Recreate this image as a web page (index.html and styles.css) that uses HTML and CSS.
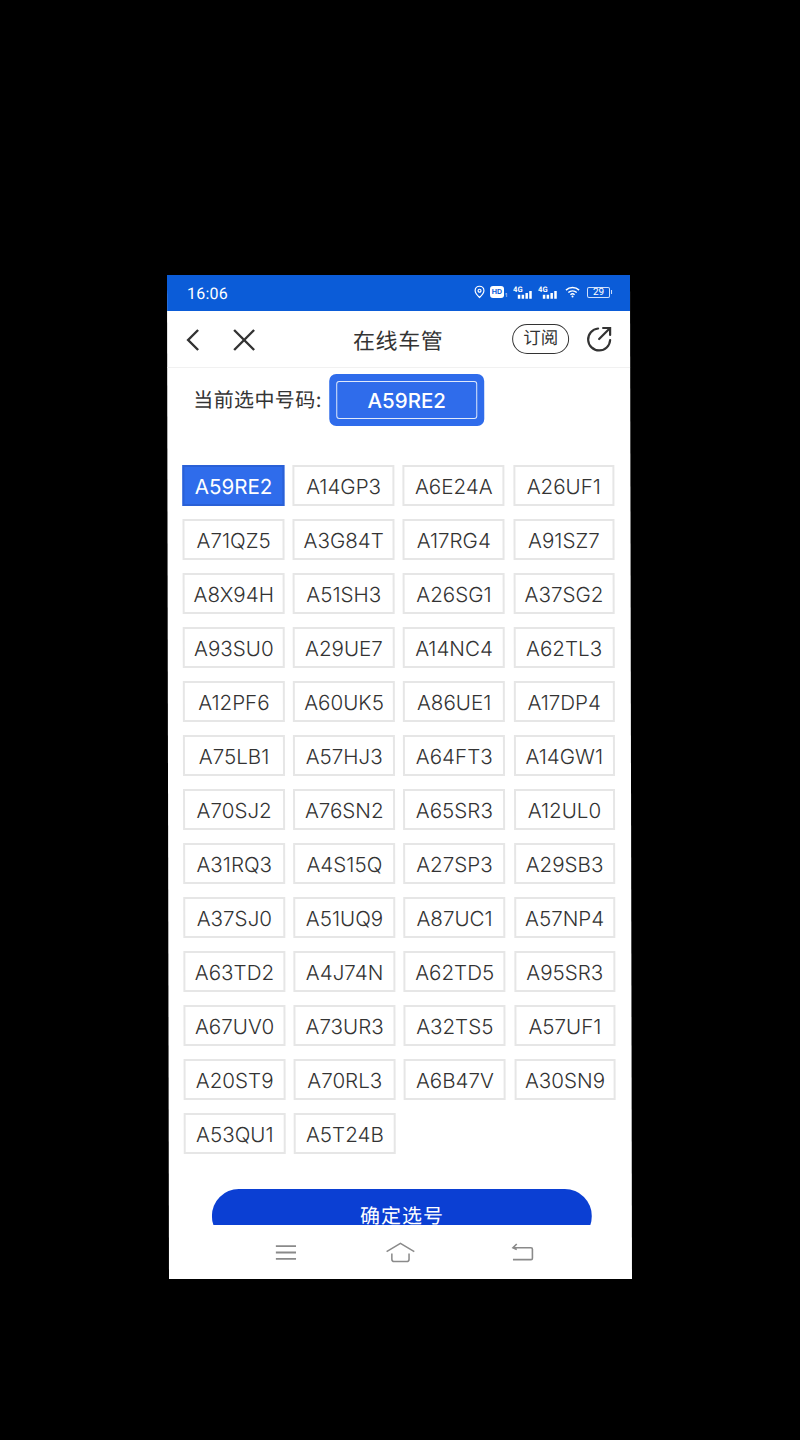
FILE: index.html
```html
<!DOCTYPE html>
<html lang="zh-CN">
<head>
<meta charset="utf-8">
<title>在线车管</title>
<link rel="stylesheet" href="styles.css">
</head>
<body>
<main class="phone">
  <header class="status">
    <span class="time">16:06</span>
    <div class="status-icons">
      <svg class="i-pin" viewBox="0 0 12 14"><path d="M6 13 C3 10 1.2 8 1.2 5.5 A4.8 4.8 0 0 1 10.8 5.5 C10.8 8 9 10 6 13Z M6 4 A1.6 1.6 0 1 0 6 7.2 A1.6 1.6 0 1 0 6 4Z" fill="none" stroke="#fff" stroke-width="1.3"/></svg>
      <span class="hd">HD</span><span class="hd-sub">1</span>
      <svg class="i-net" viewBox="0 0 22 14"><text x="0" y="6.5" class="net-text">4G</text><rect x="5" y="10" width="2.6" height="4" fill="#fff"/><rect x="9" y="10" width="2.6" height="4" fill="#fff"/><rect x="13" y="8" width="2.6" height="6" fill="#fff"/><rect x="17" y="6" width="2.6" height="8" fill="#fff"/></svg>
      <svg class="i-net" viewBox="0 0 22 14"><text x="0" y="6.5" class="net-text">4G</text><rect x="5" y="10" width="2.6" height="4" fill="#fff"/><rect x="9" y="10" width="2.6" height="4" fill="#fff"/><rect x="13" y="8" width="2.6" height="6" fill="#fff"/><rect x="17" y="6" width="2.6" height="8" fill="#fff"/></svg>
      <svg class="i-wifi" viewBox="0 0 16 12"><path d="M1 4 A10 10 0 0 1 15 4 M3.5 6.6 A6.4 6.4 0 0 1 12.5 6.6 M5.8 9 A3.2 3.2 0 0 1 10.2 9" fill="none" stroke="#fff" stroke-width="1.5"/><circle cx="8" cy="10.8" r="1.1" fill="#fff"/></svg>
      <span class="battery"><span class="battery-num">29</span></span>
    </div>
  </header>

  <nav class="topbar">
    <svg class="i-back" viewBox="0 0 16 24"><path d="M13 2 L3 12 L13 22" fill="none" stroke="#333" stroke-width="2.4"/></svg>
    <svg class="i-close" viewBox="0 0 24 24"><path d="M2 2 L22 22 M22 2 L2 22" fill="none" stroke="#333" stroke-width="2.4"/></svg>
    <h1 class="title">在线车管</h1>
    <span class="subscribe">订阅</span>
    <svg class="i-share" viewBox="0 0 28 28"><path d="M13 3.5 A11 11 0 1 0 25 15" fill="none" stroke="#333" stroke-width="2.2" stroke-linecap="round"/><path d="M14 14 L24 4 M18 3 H25 V10" fill="none" stroke="#333" stroke-width="2.2" stroke-linecap="round"/></svg>
  </nav>

  <section class="current">
    <span class="current-label">当前选中号码:</span>
    <div class="plate"><div class="plate-inner">A59RE2</div></div>
  </section>

  <section class="grid">
    <div class="cell active">A59RE2</div><div class="cell">A14GP3</div><div class="cell">A6E24A</div><div class="cell">A26UF1</div>
    <div class="cell">A71QZ5</div><div class="cell">A3G84T</div><div class="cell">A17RG4</div><div class="cell">A91SZ7</div>
    <div class="cell">A8X94H</div><div class="cell">A51SH3</div><div class="cell">A26SG1</div><div class="cell">A37SG2</div>
    <div class="cell">A93SU0</div><div class="cell">A29UE7</div><div class="cell">A14NC4</div><div class="cell">A62TL3</div>
    <div class="cell">A12PF6</div><div class="cell">A60UK5</div><div class="cell">A86UE1</div><div class="cell">A17DP4</div>
    <div class="cell">A75LB1</div><div class="cell">A57HJ3</div><div class="cell">A64FT3</div><div class="cell">A14GW1</div>
    <div class="cell">A70SJ2</div><div class="cell">A76SN2</div><div class="cell">A65SR3</div><div class="cell">A12UL0</div>
    <div class="cell">A31RQ3</div><div class="cell">A4S15Q</div><div class="cell">A27SP3</div><div class="cell">A29SB3</div>
    <div class="cell">A37SJ0</div><div class="cell">A51UQ9</div><div class="cell">A87UC1</div><div class="cell">A57NP4</div>
    <div class="cell">A63TD2</div><div class="cell">A4J74N</div><div class="cell">A62TD5</div><div class="cell">A95SR3</div>
    <div class="cell">A67UV0</div><div class="cell">A73UR3</div><div class="cell">A32TS5</div><div class="cell">A57UF1</div>
    <div class="cell">A20ST9</div><div class="cell">A70RL3</div><div class="cell">A6B47V</div><div class="cell">A30SN9</div>
    <div class="cell">A53QU1</div><div class="cell">A5T24B</div>
  </section>

  <div class="confirm-clip"><button class="confirm">确定选号</button></div>

  <footer class="sysnav">
    <svg class="i-menu" viewBox="0 0 24 18"><path d="M1 2 H23 M1 9 H23 M1 16 H23" stroke="#8a8a8a" stroke-width="2"/></svg>
    <svg class="i-home" viewBox="0 0 32 22"><path d="M1.5 10 L16 1.5 L30.5 10" fill="none" stroke="#8a8a8a" stroke-width="1.6"/><path d="M7 12 V18 Q7 20.5 9.5 20.5 H22.5 Q25 20.5 25 18 V12" fill="none" stroke="#8a8a8a" stroke-width="1.6"/></svg>
    <svg class="i-ret" viewBox="0 0 24 20"><path d="M2 5 H21 Q22.5 5 22.5 6.5 V16 Q22.5 17.5 21 17.5 H2 M6 1 L2 5 L6 7" fill="none" stroke="#8a8a8a" stroke-width="1.7"/></svg>
  </footer>
</main>
</body>
</html>
```
FILE: styles.css
```css
* { box-sizing: border-box; }
html, body { margin: 0; height: 1440px; background: #000; overflow: hidden; }
body { padding: 275px 0 0 168px; font-family: "Inter", "Noto Sans CJK SC", sans-serif; }

.phone {
  width: 463px;
  height: 1004px;
  background: #fff;
  display: flex;
  flex-direction: column;
  transform: skewX(0.114deg);
  overflow: hidden;
}

.status {
  height: 36px;
  flex: none;
  background: #0b5cd8;
  color: #fff;
  display: flex;
  align-items: center;
  justify-content: space-between;
  padding: 0 20px;
}
.time { font-size: 16px; font-family: "Roboto", sans-serif; letter-spacing: .2px; }
.status-icons { display: flex; align-items: center; margin-bottom: 2px; }
.i-pin { width: 11px; height: 14px; margin-right: 5px; }
.hd {
  width: 14px; height: 12px; background: #fff; color: #0b5cd8;
  border-radius: 3px; font-size: 7px; font-weight: 700; line-height: 12px; text-align: center;
}
.hd-sub { font-size: 5px; margin: 7px 6px 0 1px; line-height: 5px; }
.i-net { width: 21px; height: 14px; margin-right: 4px; }
.net-text { font: 700 8px "Roboto", sans-serif; fill: #fff; }
.i-wifi { width: 15px; height: 12px; margin: 0 7px 0 2px; }
.battery {
  width: 23px; height: 11px; border: 1px solid #cfe0fb; border-radius: 2px;
  display: flex; align-items: center; justify-content: center; position: relative;
}
.battery::after { content: ""; width: 1.5px; height: 4px; background: #cfe0fb; position: absolute; right: -3px; top: 2.5px; }
.battery-num { font-size: 10px; line-height: 10px; font-family: "Roboto", sans-serif; }

.topbar {
  height: 57px;
  flex: none;
  display: flex;
  align-items: center;
  padding: 1px 18px 0;
  border-bottom: 1px solid #f1f1f1;
  color: #333;
}
.i-back { width: 16px; height: 24px; margin-right: 31px; }
.i-close { width: 24px; height: 24px; }
.title { flex: 1; margin: 0 0 2px; font-size: 22px; font-weight: 400; text-align: center; padding-left: 28px; letter-spacing: .6px; }
.subscribe {
  width: 57px; height: 30px; border: 1.5px solid #333; border-radius: 15px;
  font-size: 17.5px; line-height: 26px; text-align: center; margin: 0 16px 1px 0;
}
.i-share { width: 28px; height: 28px; margin: 0 -1px 1px 0; }

.current {
  height: 52px;
  flex: none;
  margin-top: 6px;
  display: flex;
  align-items: center;
  padding-left: 26px;
  color: #333;
}
.current-label { font-size: 20px; width: 136px; letter-spacing: .4px; margin-bottom: 3px; white-space: nowrap; }
.plate {
  width: 155px; height: 52px; background: #2f6ceb; border-radius: 7px; padding: 7px;
}
.plate-inner {
  height: 38px; border: 1.5px solid #dfe9fb; border-radius: 3px; color: #fff;
  font-size: 20.5px; font-weight: 500; line-height: 37px; text-align: center;
}

.grid {
  flex: none;
  margin-top: 39px;
  padding: 0 15.3px;
  display: grid;
  grid-template-columns: repeat(4, 101.6px);
  grid-auto-rows: 41px;
  column-gap: 8.5px;
  row-gap: 13px;
}
.cell {
  border: 2px solid #e6e6e6;
  color: #333;
  font-size: 20.6px;
  font-weight: 350;
  line-height: 40px;
  text-align: center;
  white-space: nowrap;
}
.cell.active { background: #2f6ceb; border-color: #2a60d6; color: #fff; font-weight: 400; }

.confirm-clip {
  flex: none;
  height: 36px;
  margin: 35px 40px 0 43px;
  overflow: hidden;
}
.confirm {
  display: block;
  width: 100%;
  height: 54px;
  border: 0;
  border-radius: 27px;
  background: #0b3fd3;
  color: #fff;
  font: 400 20px "Noto Sans CJK SC", sans-serif;
  letter-spacing: 1px;
  padding: 0 0 3px;
}

.sysnav {
  flex: 1;
  display: flex;
  align-items: center;
  padding: 0 0 0 106px;
}
.i-menu { width: 22px; height: 17px; margin-right: 88px; }
.i-home { width: 31px; height: 21px; margin-right: 95px; }
.i-ret { width: 23px; height: 19px; }
```
